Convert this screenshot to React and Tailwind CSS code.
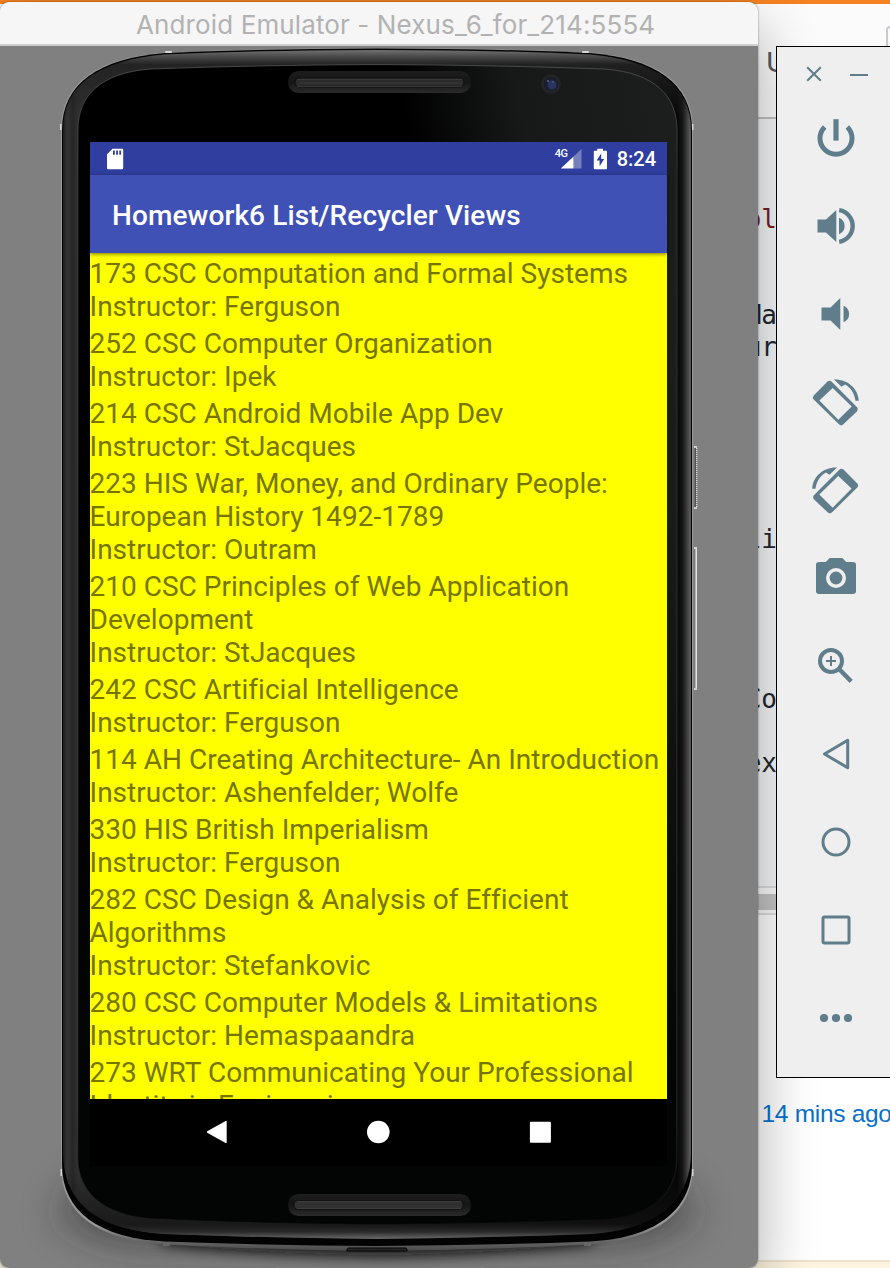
import React from "react";

const COURSES = [
  ["173 CSC Computation and Formal Systems", "Instructor: Ferguson"],
  ["252 CSC Computer Organization", "Instructor: Ipek"],
  ["214 CSC Android Mobile App Dev", "Instructor: StJacques"],
  ["223 HIS War, Money, and Ordinary People:", "European History 1492-1789", "Instructor: Outram"],
  ["210 CSC Principles of Web Application", "Development", "Instructor: StJacques"],
  ["242 CSC Artificial Intelligence", "Instructor: Ferguson"],
  ["114 AH Creating Architecture- An Introduction", "Instructor: Ashenfelder; Wolfe"],
  ["330 HIS British Imperialism", "Instructor: Ferguson"],
  ["282 CSC Design & Analysis of Efficient", "Algorithms", "Instructor: Stefankovic"],
  ["280 CSC Computer Models & Limitations", "Instructor: Hemaspaandra"],
  ["273 WRT Communicating Your Professional", "Identity in Engineering"],
];

const rotatePaths = (
  <>
    <path
      fillRule="evenodd"
      d="M16 3.6Q18 1.8 20 3.6L45.6 29.2Q47.2 31.2 45.6 33.2L31.6 46.6Q29.7 48.2 27.7 46.6L2.2 21.6Q.6 19.6 2.2 17.6ZM21.2 9.9L7.900 22.6L26.8 41.7L40.2 28.6Z"
    />
    <path d="M22.4 1.6C36 1 46.5 10.5 47.3 22.7H44C43.2 15.5 39 9.5 33.6 6.4L30 8.8Z" />
  </>
);

const TOOLS = [
  <g key="power">
    <path d="M12.7 12.9A16 16 0 1 0 35.3 12.9" fill="none" stroke="currentColor" strokeWidth="5" />
    <rect x="21.4" y="5.2" width="5.2" height="21.4" />
  </g>,
  <g key="volume-up">
    <path d="M5.5 17.4H14L24.300 8V40L14 30.6H5.5Z" />
    <path d="M27 15.8A8.8 8.8 0 0 1 27 32.2Z" />
    <path d="M27.2 8.2A16 16 0 0 1 27.2 39.8" fill="none" stroke="currentColor" strokeWidth="4.400" />
  </g>,
  <g key="volume-down">
    <path d="M9.5 17.4H18.5L28.3 8V40L18.5 30.6H9.5Z" />
    <path d="M31.5 15.8A8.8 8.8 0 0 1 31.5 32.2Z" />
  </g>,
  <g key="rotate-left" transform="translate(-.5 0)">{rotatePaths}</g>,
  <g key="rotate-right" transform="matrix(-1 0 0 1 47.500 0)">{rotatePaths}</g>,
  <g key="camera">
    <path
      fillRule="evenodd"
      d="M17.6 4H30.4L34.2 8H41Q44 8 44 11V37Q44 40 41 40H7Q4 40 4 37V11Q4 8 7 8H13.8ZM24 14A10 10 0 1 0 24 34A10 10 0 1 0 24 14Z"
    />
    <circle cx="24" cy="24" r="6.4" />
  </g>,
  <g key="zoom" fill="none" stroke="currentColor" strokeWidth="4">
    <circle cx="19" cy="19" r="11" />
    <path d="M27.5 27.5L39.2 39.4" strokeWidth="4.4" />
    <path d="M19 14V24M14 19H24" strokeWidth="2" />
  </g>,
  <path key="back" d="M35.700 10.3V37.7L12.5 24Z" fill="none" stroke="currentColor" strokeWidth="3" strokeLinejoin="round" />,
  <circle key="home" cx="24" cy="24" r="13" fill="none" stroke="currentColor" strokeWidth="3" />,
  <rect key="overview" x="11" y="11" width="26" height="26" rx="1.5" fill="none" stroke="currentColor" strokeWidth="3" />,
  <g key="more">
    <circle cx="12" cy="24" r="4.100" />
    <circle cx="24" cy="24" r="4.100" />
    <circle cx="36" cy="24" r="4.100" />
  </g>,
];

function CodeLine({ children, className }) {
  return <div className={"flex h-8 justify-end whitespace-pre leading-8 " + className}>{children}</div>;
}

function Editor() {
  return (
    <div className="flex h-[1268px] flex-col bg-white">
      <div className="h-1 shrink-0 bg-[#f58220]" />
      <div className="flex h-[115px] shrink-0 justify-between border-b-2 border-[#c0c0c0] bg-[#fbfbfb] pl-[766px]">
        <span className="mt-[39px] font-['Liberation_Sans'] text-[30px] leading-[38px] text-[#555b64]">U</span>
        <span className="mt-[22px] h-10 w-1 rounded-tl border-l-2 border-t-2 border-[#c8cacd]" />
      </div>
      <div className="h-[767px] w-[777px] shrink-0 bg-[#f5f7f9] font-['DejaVu_Sans_Mono'] text-[26px] text-[#24272e]">
        <CodeLine className="mt-[84px] text-[#7a1f22]">ol</CodeLine>
        <CodeLine className="mt-16">Ma</CodeLine>
        <CodeLine className="">ur</CodeLine>
        <CodeLine className="mt-40">li</CodeLine>
        <CodeLine className="mt-32">Co</CodeLine>
        <CodeLine className="mt-8">ex</CodeLine>
      </div>
      <div className="h-[29px] shrink-0 border-y-2 border-[#dedede] bg-[#fbfbfb] py-[6px]">
        <div className="h-4 bg-[#c4c4c4]" />
      </div>
      <div className="h-[345px] shrink-0 bg-white pl-[761.5px] pt-[183px]">
        <span className="block whitespace-nowrap font-['Liberation_Sans'] text-[24.5px] leading-8 tracking-[-0.3px] text-[#0871c9]">
          14 mins ago
        </span>
      </div>
      <div className="h-2 shrink-0 border-t-2 border-[#eee3cf] bg-[#fef4e0]" />
    </div>
  );
}

function PhoneBody() {
  return (
    <svg className="absolute left-0 top-0 h-[1222px] w-[758px]" viewBox="0 46 758 1222">
      <defs>
        <linearGradient id="rim" x1="62" x2="692" y1="0" y2="0" gradientUnits="userSpaceOnUse">
          <stop offset="0" stopColor="#161616" />
          <stop offset=".008" stopColor="#353535" />
          <stop offset=".017" stopColor="#262626" />
          <stop offset=".025" stopColor="#303030" />
          <stop offset=".5" stopColor="#222" />
          <stop offset=".976" stopColor="#050505" />
          <stop offset=".985" stopColor="#151515" />
          <stop offset=".997" stopColor="#5a5a5a" />
          <stop offset="1" stopColor="#4a4a4a" />
        </linearGradient>
        <linearGradient id="rimTop" x1="0" x2="0" y1="49" y2="120" gradientUnits="userSpaceOnUse">
          <stop offset="0" stopColor="#777" />
          <stop offset=".1" stopColor="#4c4c4c" />
          <stop offset=".22" stopColor="#222" stopOpacity=".9" />
          <stop offset="1" stopColor="#222" stopOpacity="0" />
        </linearGradient>
        <linearGradient id="rimBottom" x1="0" x2="0" y1="1170" y2="1239" gradientUnits="userSpaceOnUse">
          <stop offset="0" stopColor="#111" stopOpacity="0" />
          <stop offset=".78" stopColor="#111" stopOpacity=".7" />
          <stop offset=".9" stopColor="#2c2c2c" />
          <stop offset="1" stopColor="#6a6a6a" />
        </linearGradient>
        <linearGradient id="glass" x1="400" x2="680" y1="90" y2="40" gradientUnits="userSpaceOnUse">
          <stop offset="0" stopColor="#000" />
          <stop offset=".4" stopColor="#171818" />
          <stop offset="1" stopColor="#1d1f1f" />
        </linearGradient>
        <linearGradient id="glassFade" x1="0" x2="0" y1="500" y2="1100" gradientUnits="userSpaceOnUse">
          <stop offset="0" stopColor="#030404" stopOpacity="0" />
          <stop offset="1" stopColor="#030404" />
        </linearGradient>
        <linearGradient id="glassEdge" x1="0" x2="0" y1="64" y2="1226" gradientUnits="userSpaceOnUse">
          <stop offset="0" stopColor="#555" />
          <stop offset=".1" stopColor="#3a3a3a" />
          <stop offset=".9" stopColor="#2c2c2c" />
          <stop offset="1" stopColor="#060606" />
        </linearGradient>
        <linearGradient id="bar" x1="0" x2="0" y1="0" y2="1">
          <stop offset="0" stopColor="#1d1d1d" />
          <stop offset=".5" stopColor="#151515" />
          <stop offset="1" stopColor="#2b2b2b" />
        </linearGradient>
        <linearGradient id="silver" x1="0" x2="0" y1="1150" y2="1250" gradientUnits="userSpaceOnUse">
          <stop offset="0" stopColor="#999" />
          <stop offset=".75" stopColor="#999" />
          <stop offset="1" stopColor="#4c4c4c" />
        </linearGradient>
        <filter id="soft" x="-20%" y="-100%" width="140%" height="300%">
          <feGaussianBlur stdDeviation="7" />
        </filter>
        <filter id="wide" x="-30%" y="-100%" width="160%" height="300%">
          <feGaussianBlur stdDeviation="20" />
        </filter>
      </defs>

      <path d="M90 1180H664L700 1215L640 1240Q500 1246 377 1246Q250 1246 114 1240L54 1215Z" fill="#222" opacity=".6" filter="url(#wide)" />
      <path d="M150 1225H604L590 1243Q500 1253 377 1255Q250 1253 164 1243Z" fill="#111" filter="url(#soft)" />

      <path
        d="M61 130C61 82 98 58 165 52.5Q270 48 377 48Q490 48 590 52.5C656 58 693 82 693 130V1166C693 1214 654 1240 590 1244.500Q480 1250 377 1251Q270 1250 165 1244.500C98 1240 61 1214 61 1166Z"
        fill="url(#silver)"
      />
      <path
        d="M62 130C62 83 99 58.500 165 53Q270 48.500 377 48.500Q490 48.500 590 53C655 58.500 692 83 692 130V1164C692 1212 653 1238 590 1241.500Q480 1245.500 377 1246Q270 1245.500 165 1241.500C99 1238 62 1212 62 1164Z"
        fill="#030303"
      />
      <path
        d="M63 130C63 84 100 60 165 54.500Q270 50 377 50Q490 50 590 54.500C654 60 691 84 691 130V1152C691 1205 652 1230 590 1234Q480 1238 377 1239Q270 1238 165 1234C100 1230 63 1205 63 1152Z"
        fill="url(#rim)"
      />
      <path d="M63 130C63 84 100 60 165 54.500Q270 50 377 50Q490 50 590 54.500C654 60 691 84 691 130Z" fill="url(#rimTop)" />
      <path d="M63 1152C63 1205 100 1230 165 1234Q270 1238 377 1239Q480 1238 590 1234C652 1230 691 1205 691 1152Z" fill="url(#rimBottom)" />
      <path
        d="M78 130C78 96 100 73 150 69Q260 65 377 64.500Q495 65 605 69C655 73 677 96 677 130V1157C677 1197 650 1216 605 1219Q500 1223 377 1224Q250 1223 150 1218C104 1214 78 1193 78 1157Z"
        fill="url(#glass)"
        stroke="url(#glassEdge)"
        strokeWidth=".8"
      />
      <path
        d="M79 450H676V1157C676 1196 649 1215 605 1218Q500 1222 377 1223Q250 1222 150 1217C105 1213 79 1193 79 1157Z"
        fill="url(#glassFade)"
      />

      <g fill="#d8d8d8">
        <rect x="165" y="51" width="7" height="2" rx="1" />
        <rect x="582" y="51" width="7" height="2" rx="1" />
        <rect x="60" y="124" width="1.500" height="6" />
        <rect x="692" y="124" width="1.500" height="6" />
        <rect x="60.500" y="1169" width="1.500" height="7" />
        <rect x="692" y="1169" width="1.500" height="7" />
      </g>
      <rect x="163" y="1242" width="7" height="4" fill="#666" />
      <rect x="584" y="1242" width="7" height="4" fill="#666" />
      <path d="M347 1251V1249.500Q347 1248 349 1248H405Q407 1248 407 1249.500V1251Z" fill="#262626" stroke="#050505" />

      <rect x="288" y="71" width="183" height="22" rx="10.500" fill="url(#bar)" />
      <rect x="295" y="78" width="169" height="9" rx="4" fill="#2a2a2a" stroke="#111" />
      <path d="M297 79.500H462M299 83H462M297 86.500H462" stroke="#404040" strokeWidth=".7" />
      <rect x="288" y="1194" width="183" height="22" rx="10.500" fill="url(#bar)" />
      <rect x="294" y="1200.500" width="169" height="9" rx="4" fill="#303030" stroke="#121212" />
      <path d="M297 1201.500H461M297 1208.500H461" stroke="#444" strokeWidth=".7" />

      <circle cx="551" cy="84" r="10" fill="#232425" />
      <circle cx="551" cy="84" r="7" fill="#191d2d" />
      <circle cx="552" cy="85" r="4.500" fill="#293560" />
      <circle cx="548" cy="81" r="1" fill="#5d6d99" />
      <circle cx="553" cy="82" r=".8" fill="#5d6d99" />

      <g fill="none" strokeWidth="1.400">
        <path d="M695.300 447V508" stroke="#555" />
        <path d="M696.700 448V507" stroke="#ddd" strokeDasharray="1 1" />
        <path d="M695 548V689" stroke="#777" />
        <path d="M696.200 549V688" stroke="#eee" />
        <path d="M694 447h3M694 508h3M694 548h3M694 689h3" stroke="#eee" />
      </g>
    </svg>
  );
}

function StatusBar() {
  return (
    <div className="flex h-[33px] shrink-0 items-center bg-[#303f9f] pl-[17px] pr-[11px] text-white">
      <svg className="h-[22px] w-[17px]" viewBox="0 0 17 22">
        <path fill="currentColor" fillRule="evenodd" d="M5.500.7H15Q16.200.7 16.200 2V20Q16.200 21.200 15 21.200H1.300Q0 21.200 0 20V6.200ZM6 2.500V6.700H7.800V2.500ZM9.200 2.500V6.700H11V2.500ZM12.300 2.500V6.700H14.100V2.500Z" />
      </svg>
      <span className="ml-auto self-start pt-[6px] font-['Roboto'] text-[11px] font-medium leading-3 tracking-[-0.4px]">4G</span>
      <svg className="-ml-[8px] h-[22px] w-[22px]" viewBox="0 0 22 22">
        <path fill="#7680bd" d="M21.500 1V20.500H13.500V8.500Z" />
        <path fill="currentColor" d="M13.500 8.500V20.500H.8Z" />
      </svg>
      <svg className="ml-[11px] h-[22px] w-[15px]" viewBox="0 0 15 22">
        <path fill="currentColor" fillRule="evenodd" d="M4.300.8H10V2.700H13Q14 2.700 14 3.700V20.300Q14 21.300 13 21.300H1.800Q.8 21.300.8 20.300V3.700Q.8 2.700 1.800 2.700H4.300ZM8.200 5.500L3.600 12.600H6.600V18.200L11.200 11H8.200Z" />
      </svg>
      <span className="ml-[9px] pt-px font-['Roboto'] text-[20px] font-medium leading-[33px]">8:24</span>
    </div>
  );
}

function Screen() {
  return (
    <div className="relative ml-[90px] mt-[96px] flex h-[1024px] w-[577px] flex-col bg-black">
      <StatusBar />
      <div className="relative flex h-[78px] shrink-0 items-center bg-[#4051b5] pl-[22px] pt-[3px] font-['Roboto'] text-[28px] font-medium tracking-[0.1px] text-white shadow-[0_1px_4px_rgba(0,0,0,0.55)]">
        Homework6 List/Recycler Views
      </div>
      <div className="h-[846px] shrink-0 overflow-hidden bg-[#ffff00] pt-[4px] font-['Roboto'] text-[28px] leading-[33px] text-[#757500]">
        {COURSES.map((lines) => (
          <div key={lines[0]} className="-ml-[0.5px] mb-1 whitespace-nowrap tracking-[0.02px]">
            {lines.map((line) => (
              <p key={line}>{line}</p>
            ))}
          </div>
        ))}
      </div>
      <div className="flex h-[67px] shrink-0 items-center justify-between pb-px pl-[116px] pr-[115px] text-white">
        <svg className="h-6 w-6" viewBox="0 0 24 24" fill="currentColor">
          <path d="M19.600.9Q20.700.5 20.700 1.700V22.300Q20.700 23.500 19.600 22.900L1.200 12.700Q.3 12 1.200 11.300Z" />
        </svg>
        <svg className="h-6 w-6" viewBox="0 0 24 24" fill="currentColor">
          <circle cx="11.300" cy="12" r="11.300" />
        </svg>
        <svg className="h-6 w-6" viewBox="0 0 24 24" fill="currentColor">
          <rect x="1.900" y="1.700" width="21" height="21" rx="1" />
        </svg>
      </div>
    </div>
  );
}

function EmulatorWindow() {
  return (
    <div className="absolute left-0 top-[2px] flex h-[1266px] w-[758px] flex-col overflow-hidden rounded-[9px] bg-[#808080]">
      <div className="h-11 shrink-0 whitespace-nowrap border-b-2 border-[#d0d0d0] bg-[#f6f6f6] pl-[136px] font-['Inter'] text-[26px] leading-[46px] tracking-[0.12px] text-[#b2b2b2]">
        Android Emulator - Nexus_6_for_214:5554
      </div>
      <div className="relative h-[1222px] overflow-hidden">
        <PhoneBody />
        <Screen />
      </div>
    </div>
  );
}

function ToolWindow() {
  return (
    <div className="absolute left-[776px] top-[46px] flex h-[1032px] w-[120px] flex-col border border-black bg-[#efefef] text-[#607d8b]">
      <div className="flex h-[47px] shrink-0 items-center pl-[29px] pt-[6px]">
        <svg className="h-4 w-4" viewBox="0 0 16 16" stroke="currentColor" strokeWidth="2">
          <path d="M1.200 1.200L14.800 14.800M14.800 1.200L1.200 14.800" />
        </svg>
        <span className="ml-7 mt-[2px] h-[2px] w-[18px] bg-[#607d8b]" />
      </div>
      {TOOLS.map((tool) => (
        <div key={tool.key} className="flex h-[88px] shrink-0 items-center justify-center">
          <svg className="h-12 w-12 overflow-visible" viewBox="0 0 48 48" fill="currentColor">
            {tool}
          </svg>
        </div>
      ))}
    </div>
  );
}

export default function App() {
  return (
    <div className="relative h-[1268px] w-[890px] overflow-hidden">
      <Editor />
      <div className="absolute left-0 top-[2px] h-[1266px] w-[758px] rounded-[9px] shadow-[0_26px_60px_rgba(0,0,0,0.33),0_0_2px_rgba(0,0,0,0.5)]" />
      <EmulatorWindow />
      <ToolWindow />
    </div>
  );
}
